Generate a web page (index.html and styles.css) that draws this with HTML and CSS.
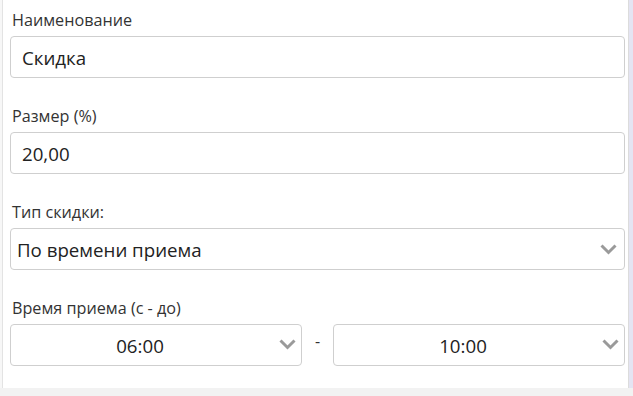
FILE: index.html
```html
<!DOCTYPE html>
<html lang="ru">
<head>
<meta charset="utf-8">
<title>Скидка</title>
<link rel="stylesheet" href="styles.css">
</head>
<body>
<div class="frame">
  <div class="edge-left"></div>
  <div class="panel">
    <div class="field">
      <label class="label">Наименование</label>
      <div class="box input">Скидка</div>
    </div>
    <div class="field">
      <label class="label">Размер (%)</label>
      <div class="box input">20,00</div>
    </div>
    <div class="field">
      <label class="label">Тип скидки:</label>
      <div class="box select">
        <span class="value">По времени приема</span>
        <svg class="chev" width="17" height="11" viewBox="0 0 17 11"><path d="M1.5 1.5 L8.5 8.5 L15.5 1.5" fill="none" stroke="#9a9a9a" stroke-width="3"/></svg>
      </div>
    </div>
    <div class="field last">
      <label class="label">Время приема (с - до)</label>
      <div class="range">
        <div class="box select time">
          <span class="value">06:00</span>
          <svg class="chev" width="17" height="11" viewBox="0 0 17 11"><path d="M1.5 1.5 L8.5 8.5 L15.5 1.5" fill="none" stroke="#9a9a9a" stroke-width="3"/></svg>
        </div>
        <span class="dash">-</span>
        <div class="box select time">
          <span class="value">10:00</span>
          <svg class="chev" width="17" height="11" viewBox="0 0 17 11"><path d="M1.5 1.5 L8.5 8.5 L15.5 1.5" fill="none" stroke="#9a9a9a" stroke-width="3"/></svg>
        </div>
      </div>
    </div>
  </div>
  <div class="edge-right"></div>
</div>
</body>
</html>
```

FILE: styles.css
```css
html, body {
  margin: 0;
  padding: 0;
}
body {
  width: 633px;
  height: 396px;
  background: #f2f2f2;
  font-family: "Open Sans", "Noto Sans", sans-serif;
  color: #333;
  overflow: hidden;
}
.frame {
  display: flex;
  height: 388px;
}
.edge-left {
  width: 2px;
  background: #f7f7f7;
  border-right: 1px solid #e3e3e3;
  flex: none;
}
.edge-right {
  width: 4px;
  background: #e4e4f2;
  border-left: 1px solid #dcdcdc;
  flex: none;
}
.panel {
  flex: 1;
  background: #fff;
  padding: 10px 3px 0 7px;
}
.field {
  display: flex;
  flex-direction: column;
  margin-bottom: 28px;
}
.field.last {
  margin-bottom: 0;
}
.label {
  font-size: 16.2px;
  line-height: 20px;
  height: 20px;
  margin: 0 0 6px 2px;
  color: #333;
}
.box {
  box-sizing: border-box;
  height: 42px;
  border: 1px solid #cfcfcf;
  border-radius: 4px;
  background: #fff;
  display: flex;
  align-items: center;
  font-size: 18.7px;
  color: #222;
}
.input {
  padding-left: 11px;
}
.select {
  padding: 0 7px 0 6px;
  justify-content: space-between;
}
.select .chev {
  flex: none;
}
.range {
  display: grid;
  grid-template-columns: 1fr 31px 1fr;
  align-items: center;
}
.time {
  position: relative;
  justify-content: center;
  padding: 0 32px 0 0;
}
.time .chev {
  position: absolute;
  right: 5px;
  top: 14px;
}
.dash {
  text-align: center;
  font-size: 16px;
  color: #333;
  margin-top: -9px;
}
```
